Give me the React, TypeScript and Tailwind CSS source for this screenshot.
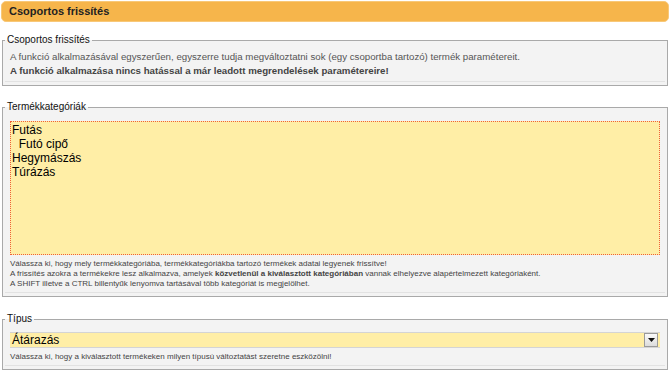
import React from "react";

const Fieldset = ({
  legend,
  className,
  children,
}: {
  legend: string;
  className?: string;
  children: React.ReactNode;
}) => (
  <fieldset
    className={`mx-[2px] border border-[#a9a9a9] bg-[#f3f3f3] px-[2px] pb-[3px] ${className ?? ""}`}
  >
    <legend className="px-[2px] text-[10px] leading-[12px] text-[#111]">{legend}</legend>
    <div className="border-b border-[#e2e2e2] px-[5px]">{children}</div>
  </fieldset>
);

export default function App() {
  return (
    <div className="relative h-[372px] w-[670px] overflow-hidden bg-white font-['Liberation_Sans',Arial,sans-serif]">
      <div className="mx-[1px] mt-[1px] flex h-[21px] items-center rounded-[5px] border border-[#f8c878] bg-[#f6b54b] pl-[7px] text-[11px] font-bold text-[#222]">
        Csoportos frissítés
      </div>

      <Fieldset legend="Csoportos frissítés" className="mt-[12px]">
        <div className="pt-[4px] pb-[3px] text-[9.7px] leading-[14px] text-[#555]">
          <div>
            A funkció alkalmazásával egyszerűen, egyszerre tudja megváltoztatni sok (egy csoportba tartozó) termék paramétereit.
          </div>
          <div className="font-bold text-[#444]">
            A funkció alkalmazása nincs hatással a már leadott megrendelések paramétereire!
          </div>
        </div>
      </Fieldset>

      <Fieldset legend="Termékkategóriák" className="mt-[15px]">
        <div className="pt-[8px]">
          <div className="h-[134px] border border-dotted border-[#f0603a] bg-[#ffeea6] px-[1px] pt-[1px] text-[12px] leading-[14px] text-black">
            <div>Futás</div>
            <div>{"\u00a0\u00a0"}Futó cipő</div>
            <div>Hegymászás</div>
            <div>Túrázás</div>
          </div>
        </div>
        <div className="pt-[4px] pb-[3px] text-[8px] leading-[10px] text-[#444]">
          <div>Válassza ki, hogy mely termékkategóriába, termékkategóriákba tartozó termékek adatai legyenek frissítve!</div>
          <div>
            A frissítés azokra a termékekre lesz alkalmazva, amelyek{" "}
            <span className="font-bold">közvetlenül a kiválasztott kategóriában</span> vannak elhelyezve alapértelmezett kategóriaként.
          </div>
          <div>A SHIFT illetve a CTRL billentyűk lenyomva tartásával több kategóriát is megjelölhet.</div>
        </div>
      </Fieldset>

      <Fieldset legend="Típus" className="mt-[16px]">
        <div className="pt-[7px]">
          <div className="flex h-[16px] items-center border-y border-[#d4d4d4] bg-[#ffeea6] pl-[2px] text-[12px] text-black">
            <span className="flex-1">Átárazás</span>
            <div className="mr-[2px] flex h-[14px] w-[14px] items-center justify-center border border-[#9a9a9a] bg-gradient-to-b from-[#fafafa] to-[#dcdcdc]">
              <svg width="7" height="4" viewBox="0 0 7 4">
                <path d="M0 0 H7 L3.5 4 Z" fill="#111" />
              </svg>
            </div>
          </div>
        </div>
        <div className="pt-[4px] pb-[3px] text-[8px] leading-[10px] text-[#444]">
          Válassza ki, hogy a kiválasztott termékeken milyen típusú változtatást szeretne eszközölni!
        </div>
      </Fieldset>
    </div>
  );
}
